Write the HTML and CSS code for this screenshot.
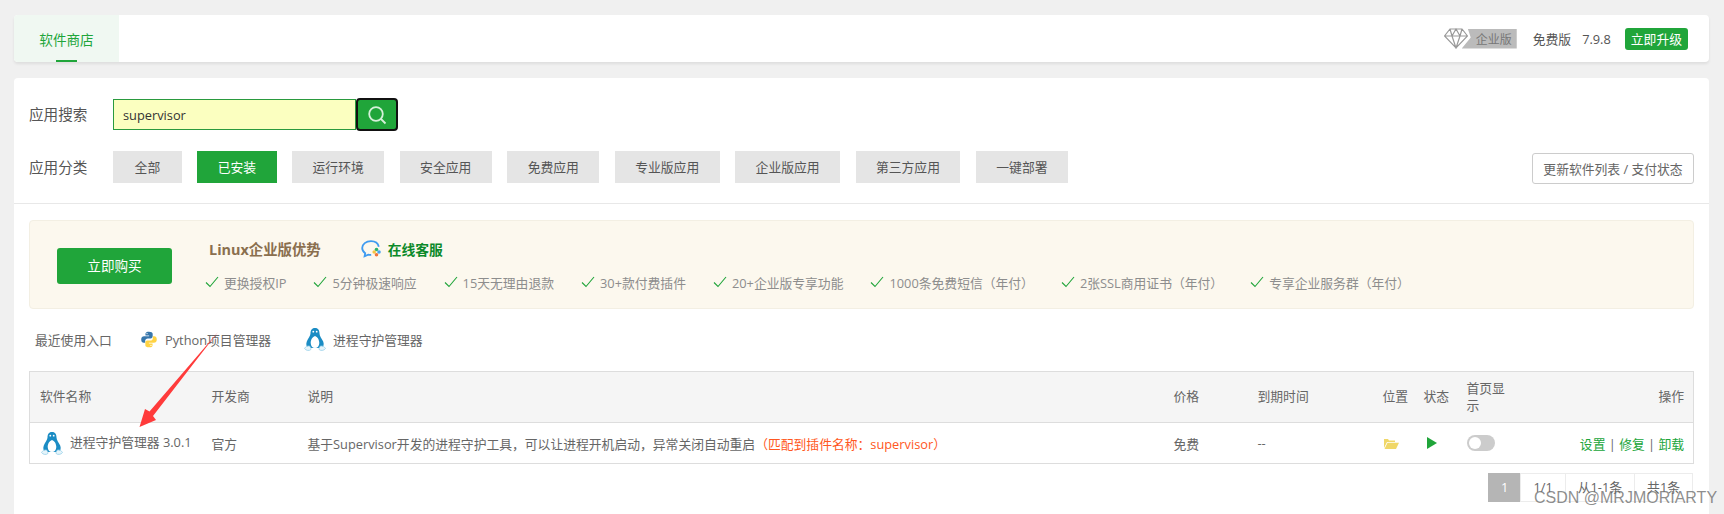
FILE: index.html
```html
<!DOCTYPE html>
<html lang="zh-CN">
<head>
    <meta charset="UTF-8">
    <title>软件商店</title>
    <link rel="stylesheet" href="styles.css">
</head>
<body>
    <svg class="defs" width="0" height="0">
        <symbol id="penguin" viewBox="0 0 24 24">
            <path fill="#1b8cc4" d="M12 .5C8.500.5 7.500 3 7.500 6c0 2.500-2.500 4.500-3.700 8-1 3-.4 5 1.200 6.500h14c1.600-1.500 2.200-3.500 1.200-6.500C18.500 10.500 16.500 8.500 16.500 6c0-3-1-5.500-4.500-5.500z"/>
            <path fill="#fff" d="M12 8.500c-2.500.8-4.300 3.800-4.300 7 0 3 1.800 5 4.300 5s4.300-2 4.300-5c0-3.200-1.800-6.200-4.300-7z"/>
            <circle fill="#fff" cx="10.300" cy="4.200" r=".9"/>
            <circle fill="#fff" cx="13.700" cy="4.200" r=".9"/>
            <path fill="#e6f4fa" stroke="#8ccbe6" stroke-width=".7" d="M1.500 21c1-1.800 3.300-3 4.800-2.500 1.200.4 1.800 2.200 1.600 3.500-1.500 1.500-5 1.300-6.400-1zM22.500 21c-1-1.800-3.300-3-4.800-2.500-1.200.4-1.800 2.200-1.600 3.500 1.500 1.500 5 1.300 6.400-1z"/>
        </symbol>
    </svg>

    <div class="top-card">
        <div class="tab">软件商店</div>
        <div class="top-right">
            <svg class="diamond" viewBox="0 0 24 21">
                <path d="M6 1h12l5.500 7L12 20 .5 8zM.5 8h23M6 1l2 7 4 12 4-12 2-7M8 8l4-7 4 7"/>
            </svg>
            <span class="ent-tag">企业版</span>
            <span class="free-ver">免费版</span>
            <span class="ver-num">7.9.8</span>
            <span class="upgrade-btn">立即升级</span>
        </div>
    </div>

    <div class="main-card">
        <div class="filters">
            <div class="filter-row search-row">
                <span class="filter-label">应用搜索</span>
                <input class="search-input" type="text" value="supervisor">
                <button class="search-btn">
                    <svg viewBox="0 0 20 20" width="20" height="20">
                        <circle cx="9" cy="9" r="6.800"/>
                        <path d="M14 14l4.500 4.500"/>
                    </svg>
                </button>
            </div>
            <div class="filter-row">
                <span class="filter-label">应用分类</span>
                <span class="cat cat-first">全部</span>
                <span class="cat cat-on">已安装</span>
                <span class="cat">运行环境</span>
                <span class="cat">安全应用</span>
                <span class="cat">免费应用</span>
                <span class="cat">专业版应用</span>
                <span class="cat">企业版应用</span>
                <span class="cat">第三方应用</span>
                <span class="cat">一键部署</span>
                <button class="refresh-btn">更新软件列表 / 支付状态</button>
            </div>
        </div>

        <div class="banner">
            <span class="buy-btn">立即购买</span>
            <div class="banner-info">
                <div class="banner-title">
                    <span class="title-text">Linux企业版优势</span>
                    <svg class="chat-icon" viewBox="0 0 21 18">
                        <path class="chat-line" d="M10 1.200C5 1.200 1.200 4 1.200 8c0 2.300 1.200 4 3 5.200l-.6 3 3.600-1.600c1 .2 2 .3 3 .2"/>
                        <path class="chat-line" d="M10 1.200c3.600 0 7 2 7.800 5.600"/>
                        <circle fill="#2fb36b" cx="15.500" cy="9.500" r="1.800"/>
                        <circle fill="#f5c342" cx="13.200" cy="12" r="1.800"/>
                        <circle fill="#4aa3f0" cx="18" cy="12" r="1.800"/>
                        <circle fill="#f0763a" cx="15.500" cy="14.800" r="1.800"/>
                    </svg>
                    <span class="service">在线客服</span>
                </div>
                <div class="perks">
                    <span class="perk"><svg class="tick" viewBox="0 0 14 12"><path d="M1 6.500l4 4L13 1"/></svg>更换授权IP</span>
                    <span class="perk"><svg class="tick" viewBox="0 0 14 12"><path d="M1 6.500l4 4L13 1"/></svg>5分钟极速响应</span>
                    <span class="perk"><svg class="tick" viewBox="0 0 14 12"><path d="M1 6.500l4 4L13 1"/></svg>15天无理由退款</span>
                    <span class="perk"><svg class="tick" viewBox="0 0 14 12"><path d="M1 6.500l4 4L13 1"/></svg>30+款付费插件</span>
                    <span class="perk"><svg class="tick" viewBox="0 0 14 12"><path d="M1 6.500l4 4L13 1"/></svg>20+企业版专享功能</span>
                    <span class="perk"><svg class="tick" viewBox="0 0 14 12"><path d="M1 6.500l4 4L13 1"/></svg>1000条免费短信（年付）</span>
                    <span class="perk"><svg class="tick" viewBox="0 0 14 12"><path d="M1 6.500l4 4L13 1"/></svg>2张SSL商用证书（年付）</span>
                    <span class="perk"><svg class="tick" viewBox="0 0 14 12"><path d="M1 6.500l4 4L13 1"/></svg>专享企业服务群（年付）</span>
                </div>
            </div>
        </div>

        <div class="recent">
            <span class="recent-label">最近使用入口</span>
            <span class="recent-item">
                <svg class="py-icon" viewBox="0 0 24 24">
                    <path fill="#3776ab" d="M12 1C9 1 7 1.800 7 4v2.500h5.200v.9H5c-2.200 0-4 1.600-4 4.600s1.600 4.600 3.600 4.600h2v-2.700c0-2 1.600-3.400 3.600-3.400h4.200c1.600 0 2.800-1.300 2.800-3V4c0-2-2.200-3-5.200-3z"/>
                    <path fill="#ffd343" d="M12 23c3 0 5-.8 5-3v-2.500h-5.200v-.9H19c2.200 0 4-1.600 4-4.600s-1.600-4.600-3.600-4.600h-2v2.700c0 2-1.600 3.400-3.600 3.400H9.600c-1.600 0-2.800 1.300-2.800 3V20c0 2 2.200 3 5.200 3z"/>
                    <circle fill="#fff" cx="9.200" cy="3.700" r=".9"/>
                    <circle fill="#fff" cx="14.800" cy="20.300" r=".9"/>
                </svg>
                Python项目管理器
            </span>
            <span class="recent-item">
                <svg class="penguin-big"><use href="#penguin"/></svg>
                进程守护管理器
            </span>
        </div>

        <table class="soft-table">
            <colgroup>
                <col class="c-name"><col class="c-dev"><col class="c-desc"><col class="c-price">
                <col class="c-exp"><col class="c-pos"><col class="c-state"><col class="c-home"><col class="c-ops">
            </colgroup>
            <thead>
                <tr>
                    <th>软件名称</th>
                    <th>开发商</th>
                    <th>说明</th>
                    <th>价格</th>
                    <th>到期时间</th>
                    <th>位置</th>
                    <th>状态</th>
                    <th class="wrap">首页显示</th>
                    <th class="ops">操作</th>
                </tr>
            </thead>
            <tbody>
                <tr>
                    <td>
                        <span class="soft-name">
                            <svg class="penguin-row"><use href="#penguin"/></svg>
                            <span class="name-text">进程守护管理器 3.0.1</span>
                        </span>
                    </td>
                    <td>官方</td>
                    <td>基于Supervisor开发的进程守护工具，可以让进程开机启动，异常关闭自动重启<span class="match">（匹配到插件名称：supervisor）</span></td>
                    <td>免费</td>
                    <td>--</td>
                    <td>
                        <svg class="folder" viewBox="0 0 16 12">
                            <path d="M1 11V2h4l1 1.500h6V5H4L1 11zM4.500 5.800H16L13 12H1.500z"/>
                        </svg>
                    </td>
                    <td>
                        <svg class="play" viewBox="0 0 10 12"><path d="M0 0l10 6-10 6z"/></svg>
                    </td>
                    <td><span class="toggle"><span class="knob"></span></span></td>
                    <td class="ops"><a class="op">设置</a> | <a class="op">修复</a> | <a class="op">卸载</a></td>
                </tr>
            </tbody>
        </table>

        <div class="pager">
            <span class="page page-on">1</span>
            <span class="page">1/1</span>
            <span class="page">从1-1条</span>
            <span class="page page-last">共1条</span>
        </div>
    </div>

    <svg class="arrow" viewBox="0 0 1724 514">
        <polygon points="218,332 153,416 156,420 139.500,427 145,409 149.500,411.500"/>
    </svg>
    <span class="watermark">CSDN @MRJMORIARTY</span>
</body>
</html>
```

FILE: styles.css
```css
body {
    font-family: "Open Sans", "Noto Sans CJK SC", sans-serif;
    font-size: 12.8px;
    color: #666;
    height: 514px;
    margin: 0;
    background-color: #f0f0f0;
    position: relative;
    overflow: hidden;
}

.defs {
    position: absolute;
}

.top-card {
    display: flex;
    justify-content: space-between;
    align-items: center;
    width: 1695px;
    height: 47px;
    margin: 15px 0 16px 14px;
    background: white;
    border-radius: 4px;
    box-shadow: 0 2px 3px rgba(0,0,0,0.08);
}

.tab {
    position: relative;
    display: flex;
    align-items: center;
    justify-content: center;
    width: 105px;
    height: 100%;
    font-size: 13.6px;
    background: #f0f8f2;
    color: #20a53a;
    border-radius: 4px 0 0 4px;
}

.tab::after {
    content: "";
    position: absolute;
    left: 42px;
    bottom: 0;
    width: 21px;
    height: 2px;
    background: #20a53a;
}

.top-right {
    display: flex;
    align-items: center;
    padding-right: 21px;
    color: #555;
}

.diamond {
    width: 24px;
    height: 21px;
    fill: none;
    stroke: #999;
    stroke-width: 1.200;
}

.ent-tag {
    display: flex;
    align-items: center;
    justify-content: flex-end;
    width: 55px;
    height: 20px;
    margin-left: -6px;
    padding-right: 5px;
    box-sizing: border-box;
    background: #bbb;
    color: #777;
    font-size: 12px;
    clip-path: polygon(6px 0, 100% 0, 100% 100%, 0 100%, 9px 9px);
}

.free-ver {
    margin-left: 16px;
}

.ver-num {
    margin-left: 11px;
}

.upgrade-btn {
    margin-left: 14px;
    padding: 0 6px;
    height: 22px;
    line-height: 22px;
    background: #20a53a;
    color: white;
    border-radius: 3px;
}

.main-card {
    width: 1695px;
    height: 440px;
    margin-left: 14px;
    background: white;
    border-radius: 4px 4px 0 0;
}

.filters {
    padding: 20px 15px 19px;
    border-bottom: 1px solid #e8e8e8;
}

.filter-row {
    display: flex;
    align-items: flex-start;
}

.search-row {
    margin-bottom: 20px;
}

.filter-label {
    width: 84px;
    height: 32px;
    line-height: 32px;
    font-size: 14.6px;
    color: #555;
}

.search-input {
    width: 243px;
    height: 31px;
    margin-top: 1px;
    padding: 0 0 0 9px;
    box-sizing: border-box;
    font: inherit;
    color: #333;
    background: #fbffc0;
    border: 1px solid #2a9a3e;
    outline: none;
}

.search-btn {
    display: flex;
    align-items: center;
    justify-content: center;
    width: 42px;
    height: 33px;
    padding: 0;
    background: #20a53a;
    border: 2px solid #111;
    border-radius: 4px;
}

.search-btn svg {
    fill: none;
    stroke: #d6f0da;
    stroke-width: 1.800;
}

.cat {
    height: 32px;
    line-height: 32px;
    padding: 0 20.400px;
    margin-right: 15.600px;
    background: #e5e5e5;
    color: #555;
}

.cat-first {
    min-width: 28px;
    text-align: center;
}

.cat-on {
    background: #20a53a;
    color: white;
}

.refresh-btn {
    margin: 2px 0 0 auto;
    width: 162px;
    height: 31px;
    padding: 0;
    font: inherit;
    color: #666;
    background: white;
    border: 1px solid #ccc;
    border-radius: 3px;
}

.banner {
    display: flex;
    align-items: center;
    box-sizing: border-box;
    height: 89px;
    margin: 16px 15px 0;
    background: #fcf8ee;
    border: 1px solid #f3efe3;
    border-radius: 4px;
}

.buy-btn {
    width: 115px;
    height: 36px;
    line-height: 36px;
    margin: 2px 33px 0 27px;
    text-align: center;
    font-size: 13.6px;
    color: white;
    background: #20a53a;
    border-radius: 3px;
}

.banner-info {
    display: flex;
    flex-direction: column;
    gap: 13px;
}

.banner-title {
    display: flex;
    align-items: center;
    height: 22px;
    padding-left: 4px;
    font-weight: bold;
    font-size: 13.8px;
}

.title-text {
    font-size: 14.4px;
    color: #8a6f4e;
}

.chat-icon {
    width: 21px;
    height: 18px;
    margin-left: 40px;
}

.chat-line {
    fill: none;
    stroke: #3f9bf0;
    stroke-width: 1.800;
}

.service {
    margin-left: 6px;
    color: #0c8a2a;
}

.perks {
    display: flex;
    gap: 27px;
    color: #8d8d8d;
}

.perk {
    display: flex;
    align-items: center;
    white-space: nowrap;
}

.tick {
    width: 14px;
    height: 12px;
    margin-right: 5px;
    fill: none;
    stroke: #20a53a;
    stroke-width: 1.100;
}

.recent {
    display: flex;
    align-items: center;
    height: 30px;
    margin: 15px 15px 17px;
    padding-left: 6px;
    color: #666;
}

.recent-label {
    width: 105px;
}

.recent-item {
    display: flex;
    align-items: center;
    margin-right: 32px;
}

.py-icon {
    width: 18px;
    height: 17px;
    margin-right: 7px;
}

.penguin-big {
    width: 24px;
    height: 25px;
    margin-right: 6px;
}

.soft-table {
    width: 1664px;
    margin-left: 15px;
    table-layout: fixed;
    border-collapse: collapse;
}

.c-name { width: 172px; }
.c-dev { width: 96px; }
.c-desc { width: 866px; }
.c-price { width: 84px; }
.c-exp { width: 125px; }
.c-pos { width: 41px; }
.c-state { width: 43px; }
.c-home { width: 60px; }
.c-ops { width: 177px; }

.soft-table th,
.soft-table td {
    padding: 0 10px;
    text-align: left;
    font-weight: normal;
    white-space: nowrap;
}

.soft-table th {
    height: 50px;
    line-height: 17.500px;
    background: #f5f5f5;
}

.soft-table th.wrap {
    white-space: normal;
}

.soft-table td {
    height: 40px;
}

.soft-table thead tr,
.soft-table tbody tr {
    border: 1px solid #ddd;
}

.soft-table th.ops,
.soft-table td.ops {
    text-align: right;
    padding-right: 9px;
}

.soft-name {
    display: flex;
    align-items: center;
}

.name-text {
    margin-top: -4px;
}

.penguin-row {
    width: 24px;
    height: 25px;
    margin-right: 6px;
    flex-shrink: 0;
}

.match {
    color: #ff5722;
}

.folder {
    display: block;
    width: 16px;
    height: 12px;
    fill: #f0d768;
}

.play {
    display: block;
    width: 10px;
    height: 12px;
    margin-left: 3px;
    fill: #20a53a;
}

.toggle {
    display: block;
    position: relative;
    width: 28px;
    height: 16px;
    background: #ccc;
    border-radius: 8px;
}

.knob {
    position: absolute;
    left: 2px;
    top: 2px;
    width: 12px;
    height: 12px;
    background: white;
    border-radius: 50%;
}

.op {
    color: #20a53a;
}

.pager {
    display: flex;
    justify-content: flex-end;
    width: 1664px;
    margin: 9px 0 0 15px;
}

.page {
    height: 27px;
    line-height: 27px;
    padding: 0 12px;
    border: 1px solid #ececec;
    border-right: none;
}

.page-last {
    border-right: 1px solid #ececec;
}

.page-on {
    background: #b5b5b5;
    border-color: #b5b5b5;
    color: white;
}

.arrow {
    position: absolute;
    left: 0;
    top: 0;
    width: 1724px;
    height: 514px;
    fill: #ff3b3b;
    pointer-events: none;
}

.watermark {
    position: absolute;
    left: 1534px;
    top: 489px;
    font-family: "Liberation Sans", sans-serif;
    font-size: 16px;
    color: rgba(105,105,105,0.75);
}
```
